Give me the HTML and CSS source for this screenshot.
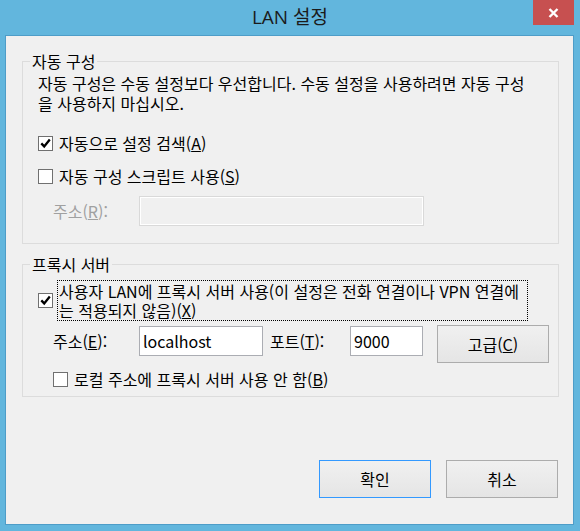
FILE: index.html
```html
<!DOCTYPE html>
<html lang="ko">
<head>
  <meta charset="UTF-8">
  <meta content="width=device-width, initial-scale=1.0" name="viewport">
  <title>LAN 설정</title>
  <link rel="stylesheet" href="styles.css">
</head>
<body>
  <div class="titlebar">
    <h1 class="title">LAN 설정</h1>
    <button class="close-btn" type="button" aria-label="닫기">
      <svg width="11" height="10" viewBox="0 0 11 10">
        <path d="M1.5 1 L9.5 9 M9.5 1 L1.5 9" stroke="#fff" stroke-width="2.4" fill="none"/>
      </svg>
    </button>
  </div>
  <div class="client">
    <fieldset class="group group-auto">
      <legend>자동 구성</legend>
      <p class="desc">자동 구성은 수동 설정보다 우선합니다. 수동 설정을 사용하려면 자동 구성<br>을 사용하지 마십시오.</p>
      <label class="check-row first">
        <span class="box"><svg width="13" height="13" viewBox="0 0 13 13"><path d="M2.3 6.4 L5.2 9.4 L10.8 2.6" stroke="#000" stroke-width="2.3" fill="none"/></svg></span>
        <span>자동으로 설정 검색(<u>A</u>)</span>
      </label>
      <label class="check-row second">
        <span class="box"></span>
        <span>자동 구성 스크립트 사용(<u>S</u>)</span>
      </label>
      <div class="field-row script-row">
        <span class="field-label disabled">주소(<u>R</u>):</span>
        <input class="input input-disabled" type="text" disabled>
      </div>
    </fieldset>

    <fieldset class="group group-proxy">
      <legend>프록시 서버</legend>
      <div class="proxy-check">
        <span class="box"><svg width="13" height="13" viewBox="0 0 13 13"><path d="M2.3 6.4 L5.2 9.4 L10.8 2.6" stroke="#000" stroke-width="2.3" fill="none"/></svg></span>
        <span class="focus-label">사용자 LAN에 프록시 서버 사용(이 설정은 전화 연결이나 VPN 연결에<br>는 적용되지 않음)(<u>X</u>)</span>
      </div>
      <div class="field-row proxy-row">
        <span class="field-label">주소(<u>E</u>):</span>
        <input class="input input-host" type="text" value="localhost">
        <span class="field-label port-label">포트(<u>T</u>):</span>
        <input class="input input-port" type="text" value="9000">
        <button class="btn btn-advanced" type="button">고급(<u>C</u>)</button>
      </div>
      <label class="check-row bypass">
        <span class="box"></span>
        <span>로컬 주소에 프록시 서버 사용 안 함(<u>B</u>)</span>
      </label>
    </fieldset>

    <div class="actions">
      <button class="btn btn-default" type="button">확인</button>
      <button class="btn" type="button">취소</button>
    </div>
  </div>
</body>
</html>
```

FILE: styles.css
```css
html, body {
    height: 100%;
}
body {
    margin: 0;
    display: flex;
    flex-direction: column;
    background: #62b6dd;
    font-family: "Noto Sans CJK KR", sans-serif;
    font-size: 16px;
    color: #000;
}
.titlebar {
    flex: none;
    height: 35px;
    display: grid;
    grid-template-columns: 1fr auto 1fr;
}
.title {
    grid-column: 2;
    margin: 0;
    font-family: "Open Sans", "Noto Sans CJK KR", sans-serif;
    font-size: 19px;
    font-weight: normal;
    line-height: 35px;
    color: #1b1b1b;
}
.close-btn {
    grid-column: 3;
    justify-self: end;
    align-self: start;
    width: 41px;
    height: 25px;
    margin-right: 6px;
    padding: 0;
    border: none;
    background: #c75050;
    display: flex;
    align-items: center;
    justify-content: center;
}
.client {
    flex: 1;
    margin: 0 6px 6px 5px;
    background: #f0f0f0;
    border: 1px solid #4e9dc8;
    display: flex;
    flex-direction: column;
}
.group {
    margin: 15px 14px 0 16px;
    padding: 2px 0 17px;
    border: 1px solid #dcdcdc;
    min-width: 0;
}
.group legend {
    margin-left: 7px;
    padding: 0 2px;
    line-height: 20px;
}
.group-proxy {
    margin-top: 10px;
    padding: 6px 0 7px;
}
.desc {
    margin: 0 0 0 15px;
    line-height: 20px;
}
.check-row {
    display: flex;
    align-items: center;
    gap: 6px;
    height: 20px;
    line-height: 20px;
    margin-left: 15px;
}
.check-row.first {
    margin-top: 20px;
}
.check-row.second {
    margin-top: 13px;
}
.check-row.bypass {
    margin: 6px 0 0 30px;
}
.box {
    flex: none;
    width: 15px;
    height: 15px;
    box-sizing: border-box;
    border: 1px solid #707070;
    background: #fff;
    display: flex;
}
.field-row {
    display: flex;
    align-items: center;
    margin: 10px 0 0 30px;
}
.field-row > * {
    flex: none;
}
.field-label {
    width: 86px;
    line-height: 30px;
}
.disabled {
    color: #a0a0a0;
}
.input {
    box-sizing: border-box;
    height: 30px;
    margin: 0;
    padding: 0 3px;
    border: 1px solid #abadb3;
    background: #fff;
    font: inherit;
    color: #000;
    outline: none;
}
.input-disabled {
    width: 285px;
    border-color: #d9d9d9;
    background: #f0f0f0;
    box-shadow: inset 0 0 0 1px #fff;
}
.proxy-check {
    display: flex;
    align-items: center;
    gap: 4px;
    margin: 0 30px 0 15px;
}
.focus-label {
    flex: 1;
    border: 1px dotted #000;
    padding: 1px 2px 0 1px;
    line-height: 19px;
}
.proxy-row {
    align-items: flex-start;
    margin-top: 4px;
}
.proxy-row .field-label,
.proxy-row .input {
    margin-top: 1px;
}
.input-host {
    width: 124px;
}
.port-label {
    width: 80px;
    margin-left: 7px;
}
.input-port {
    width: 73px;
}
.btn {
    width: 112px;
    height: 38px;
    padding: 0;
    border: 1px solid #acacac;
    background: linear-gradient(#f0f0f0, #e5e5e5);
    font: inherit;
    color: #000;
}
.btn-advanced {
    margin-left: 14px;
}
.btn-default {
    border-color: #3399ff;
}
.actions {
    display: flex;
    justify-content: flex-end;
    gap: 15px;
    margin: 63px 15px 0 0;
}
```
